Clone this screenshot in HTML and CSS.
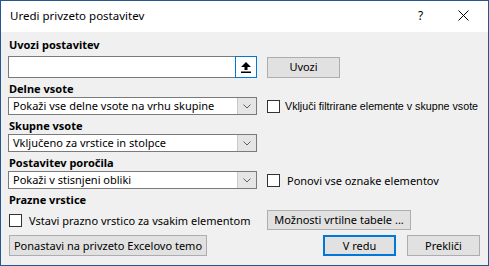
FILE: index.html
```html
<!DOCTYPE html>
<html lang="sl">

    <head>
        <meta charset="UTF-8">
        <meta name="viewport" content="width=device-width, initial-scale=1.0">
        <title>Uredi privzeto postavitev</title>
        <link rel="stylesheet" href="styles.css">
    </head>

    <body>
        <div id="dialog">
            <div id="titlebar">
                <span class="title">Uredi privzeto postavitev</span>
                <span class="help">?</span>
                <svg class="close" width="11" height="11" viewBox="0 0 11 11">
                    <path d="M0.5 0.5 L10.5 10.5 M10.5 0.5 L0.5 10.5" stroke="#000" stroke-width="1" fill="none"/>
                </svg>
            </div>

            <div id="content">
                <div class="group-label">Uvozi postavitev</div>
                <div class="row">
                    <div class="left">
                        <div class="file-input">
                            <div class="file-text"></div>
                            <div class="file-pick">
                                <svg width="10" height="11" viewBox="0 0 10 11">
                                    <path d="M5 0 L10 5 L6.5 5 L6.5 8 L3.5 8 L3.5 5 L0 5 Z" fill="#000"/>
                                    <rect x="0" y="9.5" width="10" height="1.5" fill="#000"/>
                                </svg>
                            </div>
                        </div>
                    </div>
                    <button class="btn btn-import">Uvozi</button>
                </div>

                <div class="group-label">Delne vsote</div>
                <div class="row">
                    <div class="left">
                        <div class="select">
                            <span class="select-text">Pokaži vse delne vsote na vrhu skupine</span>
                            <span class="select-arrow"><svg width="8" height="5" viewBox="0 0 8 5"><path d="M0.5 0.5 L4 4 L7.5 0.5" stroke="#606060" fill="none"/></svg></span>
                        </div>
                    </div>
                    <label class="check check-narrow"><span class="box"></span>Vključi filtrirane elemente v skupne vsote</label>
                </div>

                <div class="group-label">Skupne vsote</div>
                <div class="row">
                    <div class="left">
                        <div class="select">
                            <span class="select-text">Vključeno za vrstice in stolpce</span>
                            <span class="select-arrow"><svg width="8" height="5" viewBox="0 0 8 5"><path d="M0.5 0.5 L4 4 L7.5 0.5" stroke="#606060" fill="none"/></svg></span>
                        </div>
                    </div>
                </div>

                <div class="group-label">Postavitev poročila</div>
                <div class="row">
                    <div class="left">
                        <div class="select">
                            <span class="select-text">Pokaži v stisnjeni obliki</span>
                            <span class="select-arrow"><svg width="8" height="5" viewBox="0 0 8 5"><path d="M0.5 0.5 L4 4 L7.5 0.5" stroke="#606060" fill="none"/></svg></span>
                        </div>
                    </div>
                    <label class="check"><span class="box"></span>Ponovi vse oznake elementov</label>
                </div>

                <div class="group-label">Prazne vrstice</div>
                <div class="row row-blank">
                    <div class="left">
                        <label class="check"><span class="box"></span>Vstavi prazno vrstico za vsakim elementom</label>
                    </div>
                    <button class="btn btn-options">Možnosti vrtilne tabele ...</button>
                </div>

                <div class="footer">
                    <button class="btn btn-reset">Ponastavi na privzeto Excelovo temo</button>
                    <div class="spacer"></div>
                    <button class="btn btn-ok">V redu</button>
                    <button class="btn btn-cancel">Prekliči</button>
                </div>
            </div>
        </div>
    </body>

</html>
```

FILE: styles.css
```css
html {
    height: 100%;
}

body {
    margin: 0px;
    width: 489px;
    height: 266px;
    overflow: hidden;
    font-size: 11px;
    font-family: "Noto Sans", "Open Sans", sans-serif;
    color: #000;
    background: #f0f0f0;
}

body * {
    box-sizing: border-box;
}

#dialog {
    width: 489px;
    height: 266px;
    border: 1px solid #24578f;
    display: flex;
    flex-direction: column;
    background: #f0f0f0;
}

#titlebar {
    height: 31px;
    background: #fff;
    display: flex;
    align-items: center;
    padding: 0px 0px 2px 9px;
    font-size: 11.5px;
}

.title {
    flex-grow: 1;
}

.help {
    width: 12px;
    margin-right: 28px;
    font-size: 12px;
}

.close {
    margin-right: 19px;
}

#content {
    padding: 5px 8px 0px 7px;
    display: flex;
    flex-direction: column;
}

.group-label {
    font-weight: bold;
    line-height: 16px;
    height: 16px;
    padding-left: 1px;
}

.row {
    display: flex;
    align-items: center;
    margin-bottom: 3px;
}

.left {
    width: 249px;
    flex-shrink: 0;
    margin-right: 10px;
}

.file-input {
    display: flex;
    height: 22px;
    border: 1px solid #7a7a7a;
    background: #fff;
    margin-top: 3px;
}

.file-text {
    flex-grow: 1;
}

.file-pick {
    width: 22px;
    margin: -1px -1px -1px 0px;
    border: 1px solid #0078d7;
    background: #fff;
    display: flex;
    align-items: center;
    justify-content: center;
}

.btn {
    font: inherit;
    color: #000;
    background: #e1e1e1;
    border: 1px solid #adadad;
    border-radius: 0px;
    padding: 0px;
    height: 21px;
    line-height: 18px;
    white-space: nowrap;
}

.btn-import {
    width: 73px;
    margin-top: 3px;
}

.select {
    display: flex;
    align-items: stretch;
    height: 18px;
    border: 1px solid #7a7a7a;
    background: #fff;
}

.select-text {
    flex-grow: 1;
    padding-left: 4px;
    line-height: 16px;
    white-space: nowrap;
    overflow: hidden;
}

.select-arrow {
    width: 19px;
    background: #e5e5e5;
    border-left: 1px solid #c8c8c8;
    display: flex;
    align-items: center;
    justify-content: center;
    padding-top: 1px;
}

.check {
    display: flex;
    align-items: center;
    white-space: nowrap;
}

.box {
    width: 13px;
    height: 13px;
    border: 1px solid #333;
    background: #fff;
    margin-right: 7px;
    flex-shrink: 0;
}

.check-narrow {
    font-family: "Liberation Sans", sans-serif;
    font-size: 10.7px;
}

.check-narrow .box {
    margin-right: 5px;
}

.row-blank {
    margin-top: 2px;
    margin-bottom: 0px;
}

.row-blank .left {
    padding-left: 1px;
}

.btn-options {
    width: 144px;
    height: 20px;
}

.footer {
    display: flex;
    margin-top: 5px;
    padding-left: 1px;
}

.btn-reset {
    width: 198px;
}

.spacer {
    flex-grow: 1;
}

.btn-ok {
    width: 73px;
    border: 2px solid #0078d7;
    margin-right: 11px;
}

.btn-cancel {
    width: 73px;
}
```
